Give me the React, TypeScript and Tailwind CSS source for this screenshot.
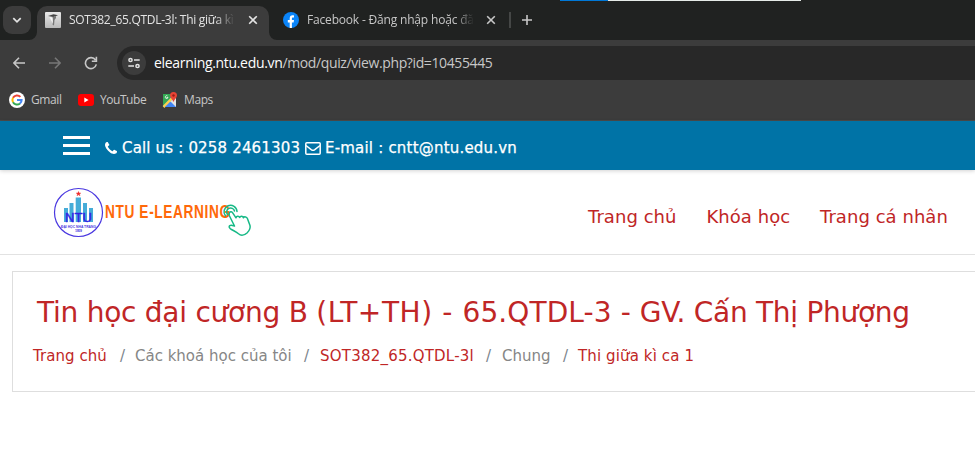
import React from "react";

const chromeFont = "font-['Open_Sans','Noto_Sans',sans-serif]";
const pageFont = "font-['DejaVu_Sans',sans-serif]";

function Close() {
  return (
    <svg width="10" height="10" viewBox="0 0 10 10" stroke="currentColor" strokeWidth="1.6" className="shrink-0">
      <path d="M1.2 1.2l7.6 7.6M8.8 1.2L1.2 8.8" />
    </svg>
  );
}

function TabStrip() {
  return (
    <div className="relative flex h-10 bg-[#202221]">
      <div className="absolute left-[560px] top-0 flex h-px w-[241px]">
        <span className="w-12 bg-[#0078d7]" />
        <span className="flex-1 bg-[#e6ebe8]" />
      </div>
      <button className="ml-[3px] mt-1.5 flex h-7 w-7 items-center justify-center rounded-[9px] bg-[#3c3c3c]">
        <svg width="10" height="10" viewBox="0 0 10 10" fill="none" stroke="#e3e3e3" strokeWidth="1.7">
          <path d="M1.3 3.2L5 6.9l3.700-3.700" />
        </svg>
      </button>
      <div className="relative ml-1.5 mt-1.5 flex h-[34px] w-[232px] items-center rounded-t-[10px] bg-[#3c3c3c] pb-1.5 pl-2">
        <svg className="absolute -left-2 bottom-0" width="8" height="8"><path d="M8 0v8H0A8 8 0 0 0 8 0" fill="#3c3c3c" /></svg>
        <svg className="absolute -right-2 bottom-0" width="8" height="8"><path d="M0 0v8h8A8 8 0 0 1 0 0" fill="#3c3c3c" /></svg>
        <svg width="16" height="16" viewBox="0 0 16 16" className="shrink-0">
          <defs>
            <linearGradient id="fav" x2="0" y2="1"><stop stopColor="#e8e8e8" /><stop offset="1" stopColor="#b9b9b9" /></linearGradient>
          </defs>
          <rect width="16" height="16" rx="1" fill="url(#fav)" />
          <path d="M3 4L8.500 2.200l4.500 1-4.500 1.800z" fill="#444" />
          <path d="M7.500 5l3.500-1v2L9.500 8l-.5 5.500-1.400-.8.2-4.500z" fill="#777" />
          <path d="M4.500 5l3 .7.500 6L6.500 9z" fill="#fff" opacity=".8" />
        </svg>
        <span className={`ml-2 w-[166px] overflow-hidden whitespace-nowrap text-[12px] tracking-[-0.28px] text-[#e3e3e3] [mask-image:linear-gradient(to_right,#000_88%,transparent)] ${chromeFont}`}>
          SOT382_65.QTDL-3l: Thi giữa kì
        </span>
        <span className="ml-[13px] text-[#e3e3e3]"><Close /></span>
      </div>
      <div className="ml-[14px] mt-1.5 flex h-7 items-center">
        <svg width="16" height="16" viewBox="0 0 16 16" className="shrink-0">
          <circle cx="8" cy="8" r="8" fill="#0a84f8" />
          <path d="M6.7 16v-5.600H4.800V8h1.900V6.400c0-2.200 1.100-3.200 2.900-3.200.6 0 1.100.1 1.400.2v2.100H10c-.9 0-1.100.4-1.100 1.100V8H11l-.4 2.400H8.900V16" fill="#fff" />
        </svg>
        <span className={`ml-2 w-[167px] overflow-hidden whitespace-nowrap text-[12px] tracking-[-0.18px] text-[#c7c7c7] [mask-image:linear-gradient(to_right,#000_88%,transparent)] ${chromeFont}`}>
          Facebook - Đăng nhập hoặc đăn
        </span>
        <span className="ml-3 text-[#c7c7c7]"><Close /></span>
        <span className="ml-[13px] h-4 w-0.5 bg-[#454746]" />
        <svg className="ml-[10px]" width="12" height="12" viewBox="0 0 12 12" stroke="#c7c7c7" strokeWidth="1.6"><path d="M6 1v10M1 6h10" /></svg>
      </div>
    </div>
  );
}

function Toolbar() {
  return (
    <div className="flex h-10 items-center bg-[#3c3c3c] pb-px pt-[7px]">
      <svg className="ml-[13px]" width="12" height="12" viewBox="0 0 12 12" fill="none" stroke="#c7c7c7" strokeWidth="1.6"><path d="M12 6H1.200M6 .8L.9 6 6 11.200" /></svg>
      <svg className="ml-6" width="12" height="12" viewBox="0 0 12 12" fill="none" stroke="#777" strokeWidth="1.6"><path d="M0 6h10.800M6 .8L11.100 6 6 11.200" /></svg>
      <svg className="ml-[23px]" width="14" height="14" viewBox="0 0 14 14" fill="none" stroke="#c7c7c7" strokeWidth="1.6"><path d="M12.300 8.400A5.500 5.500 0 1 1 11.500 4M12.400.7v4.600H7.800" /></svg>
      <div className="ml-[19px] flex h-[34px] flex-1 items-center rounded-l-full bg-[#282828] pl-[5px]">
        <span className="flex h-6 w-6 items-center justify-center rounded-full bg-[#3c3c3c]">
          <svg width="12" height="12" viewBox="0 0 12 12" fill="none" stroke="#e3e3e3" strokeWidth="1.5"><circle cx="2.500" cy="3" r="1.600" /><path d="M6 3h5.700M.3 9H6" /><circle cx="9.500" cy="9" r="1.600" /></svg>
        </span>
        <span className={`mb-0.5 ml-2 whitespace-nowrap text-[14px] tracking-[-0.38px] text-[#c7c7c7] ${chromeFont}`}>
          <span className="tracking-[-0.32px] text-white">elearning.ntu.edu.vn</span>/mod/quiz/view.php?id=10455445
        </span>
      </div>
    </div>
  );
}

function Bookmarks() {
  return (
    <div className={`flex h-[41px] items-center border-b border-[#4b4b4b] bg-[#3c3c3c] pl-[9px] text-[12px] text-[#c7c7c7] ${chromeFont}`}>
      <svg width="16" height="16" viewBox="0 0 16 16" fill="none" strokeWidth="2">
        <circle cx="8" cy="8" r="8" fill="#fff" />
        <path d="M11.400 4.900A4.600 4.600 0 0 0 4 5.800" stroke="#ea4335" />
        <path d="M4 5.800a4.600 4.600 0 0 0 0 4.400" stroke="#fbbc05" />
        <path d="M4 10.200a4.600 4.600 0 0 0 7 1.300" stroke="#34a853" />
        <path d="M11 11.500A4.600 4.600 0 0 0 12.600 8H8" stroke="#4285f4" />
      </svg>
      <span className="ml-1.5 w-[30px] tracking-[-0.4px]">Gmail</span>
      <svg className="ml-[17px]" width="16" height="12" viewBox="0 0 16 12"><rect width="16" height="12" rx="3" fill="#f00" /><path d="M6.300 3.500v5L10.600 6z" fill="#fff" /></svg>
      <span className="ml-1.5 w-[46px] tracking-[-0.45px]">YouTube</span>
      <svg className="ml-4" width="16" height="16" viewBox="0 0 16 16">
        <path d="M1 2h13v13H1z" fill="#4285f4" />
        <path d="M1 2h11L1 14z" fill="#34a853" />
        <path d="M1.500 15L13 3.500" stroke="#fbd04b" strokeWidth="2.500" />
        <path d="M14 4v11L8.500 9.500z" fill="#e4e4e4" />
        <path d="M3 15l5-5 5 5z" fill="#4285f4" />
        <path d="M6 5.500H4.500M5.500 4a1.400 1.400 0 1 0 .5 1.500" stroke="#fff" strokeWidth=".8" fill="none" />
        <path d="M11.500 0a3.500 3.500 0 0 1 3.500 3.500c0 2-2.400 3.700-3.500 6.500C10.400 7.200 8 5.500 8 3.500A3.500 3.500 0 0 1 11.500 0" fill="#ea4335" />
        <circle cx="11.500" cy="3.500" r="1.200" fill="#971e16" />
      </svg>
      <span className="ml-1.5 tracking-[-0.4px]">Maps</span>
    </div>
  );
}

function Logo() {
  return (
    <svg className="ml-[53px] mt-0.5 shrink-0" width="200" height="52" viewBox="53 187 200 52">
      <circle cx="78.500" cy="212.500" r="24" fill="#fff" stroke="#4937e0" strokeWidth="1.200" />
      <path d="M78.500 191.500l.7 1.600h1.600l-1.300 1 .5 1.700-1.500-1-1.500 1 .5-1.700-1.300-1h1.600z" fill="#ee2b2b" stroke="#ee2b2b" strokeWidth=".4" />
      <path d="M64 208h4v14h-4zM69.500 203h4v19h-4zM75.700 197.500h5.300v24.500h-5.300zM83 203h4v19h-4zM89 208h4v14h-4z" fill="#45acd8" />
      <text x="65" y="221.700" textLength="27" lengthAdjust="spacingAndGlyphs" fontSize="12.500" fill="#3420e6" stroke="#3420e6" strokeWidth=".4" className="font-['Liberation_Sans',sans-serif]">NTU</text>
      <text x="61" y="227.500" textLength="35" lengthAdjust="spacingAndGlyphs" fontSize="4.200" fontWeight="700" fill="#4937e0" className="font-['Liberation_Sans',sans-serif]">ĐẠI HỌC NHA TRANG</text>
      <text x="75" y="231.500" textLength="7" fontSize="3.500" fontWeight="700" fill="#4937e0" className="font-['Liberation_Sans',sans-serif]">1959</text>
      <g transform="translate(105 217.500) scale(.74 1)">
        <text textLength="169" fontSize="18.500" fontWeight="700" fill="#ff690a" className="font-['Liberation_Sans',sans-serif]">NTU E-LEARNING</text>
      </g>
      <g fill="none" stroke="#16b986" strokeWidth="1.500" strokeLinecap="round" strokeLinejoin="round">
        <path d="M225.500 216a6.500 6.500 0 1 1 11.500-4.500M227.500 214.500a4 4 0 1 1 7-3.500" />
        <path d="M229.500 212.500c1-1.500 2.500-.8 3.200.3l3.300 5c.5-2 3-2 3.700-.3.800-1.800 3-1.600 3.700.2 1-1.400 3.300-1 4 .8l2.600 7c.8 3-.5 5-3 7.500-2.500 2.300-6 3-8.500.8-2.500-2.300-5-3-8-5-2.300-1.800-1.500-3.600.8-3.500l3.200.7-5-10c-.6-1.400-.5-2.500 0-3.500z" />
      </g>
    </svg>
  );
}

function Crumb({ children, muted, className }: { children: React.ReactNode; muted?: boolean; className: string }) {
  return <span className={`${className} whitespace-nowrap ${muted ? "text-[#868686]" : "text-[#c02626]"}`}>{children}</span>;
}

function Slash({ className }: { className: string }) {
  return <span className={`${className} text-[#7b858c]`}>/</span>;
}

export default function App() {
  return (
    <div className="h-[460px] w-[975px] overflow-hidden bg-white">
      <TabStrip />
      <Toolbar />
      <Bookmarks />
      <div className={`relative flex h-[49px] items-center bg-[#0073a6] pl-[63px] pt-1 text-[15px] text-white shadow-[0_1px_4px_rgba(0,0,0,0.18)] ${pageFont}`}>
        <div className="mb-1 flex w-[27px] flex-col gap-[5px]">
          <i className="h-[3px] bg-white" /><i className="h-[3px] bg-white" /><i className="h-[3px] bg-white" />
        </div>
        <svg className="ml-[15px]" width="12" height="12" viewBox="192 128 1408 1408" fill="currentColor">
          <path d="M1600 1240q0 27-10 70.500t-21 68.500q-21 50-122 106-94 51-186 51-27 0-53-3.500t-57.500-12.500-47-14.500-55.500-20.500-49-18q-98-35-175-83-127-79-264-216t-216-264q-48-77-83-175-3-9-18-49t-20.500-55.500-14.500-47-12.500-57.500-3.500-53q0-92 51-186 56-101 106-122 25-11 68.500-21t70.500-10q14 0 21 3 18 6 53 76 11 19 30 54t35 63.500 31 53.500q3 4 17.500 25t21.500 35.500 7 28.500q0 20-28.500 50t-62 55-62 53-28.500 46q0 9 5 22.500t8.500 20.500 14 24 11.500 19q76 137 174 235t235 174q2 1 19 11.500t24 14 20.500 8.500 22.500 5q18 0 46-28.500t53-62 55-62 50-28.500q14 0 28.500 7t35.500 21.500 25 17.500q25 15 53.500 31t63.500 35 54 30q70 35 76 53 3 7 3 21z" />
        </svg>
        <span className="ml-[5px] mt-0.5 w-[178px] whitespace-nowrap tracking-[0.17px] [-webkit-text-stroke:0.25px]">Call us : 0258 2461303</span>
        <svg className="ml-[5px] mt-px" width="16" height="13" viewBox="0 0 16 13" fill="none" stroke="#fff" strokeWidth="1.500"><rect x=".8" y=".8" width="14.400" height="11.400" rx="1" /><path d="M1 3.500l5.500 4.300q1.500 1 3 0L15 3.500" /></svg>
        <span className="ml-1 mt-0.5 whitespace-nowrap tracking-[0.2px] [-webkit-text-stroke:0.25px]">E-mail : cntt@ntu.edu.vn</span>
      </div>
      <header className="flex h-[85px] items-center border-b border-[#e2e2e2]">
        <Logo />
        <nav className={`ml-[335px] mt-2 flex whitespace-nowrap text-[18px] tracking-[0.05px] text-[#c02626] ${pageFont}`}>
          <a className="w-[118.500px]">Trang chủ</a>
          <a className="w-[113.500px]">Khóa học</a>
          <a>Trang cá nhân</a>
        </nav>
      </header>
      <section className={`ml-3 mt-4 h-[121px] border border-r-0 border-[#dedede] ${pageFont}`}>
        <h1 className="ml-6 mt-[21px] whitespace-nowrap text-[28px] leading-10 text-[#c02626]">
          <span className="tracking-[-0.25px]">Tin học đại cương B </span>
          <span className="tracking-[0.6px]">(LT+TH) - </span>
          <span className="tracking-[0.1px]">65.QTDL-3 - </span>
          <span className="tracking-[-0.28px]">GV. Cấn Thị Phượng</span>
        </h1>
        <div className="ml-5 mt-3 flex text-[15px] leading-[22px]">
          <Crumb className="w-[87px] tracking-[0.05px]">Trang chủ</Crumb>
          <Slash className="w-[15px]" />
          <Crumb muted className="w-[169px]">Các khoá học của tôi</Crumb>
          <Slash className="w-4" />
          <Crumb className="w-[166px] tracking-[0.22px]">SOT382_65.QTDL-3l</Crumb>
          <Slash className="w-4" />
          <Crumb muted className="w-[61px]">Chung</Crumb>
          <Slash className="w-[15px]" />
          <Crumb className="tracking-[0.12px]">Thi giữa kì ca 1</Crumb>
        </div>
      </section>
    </div>
  );
}
